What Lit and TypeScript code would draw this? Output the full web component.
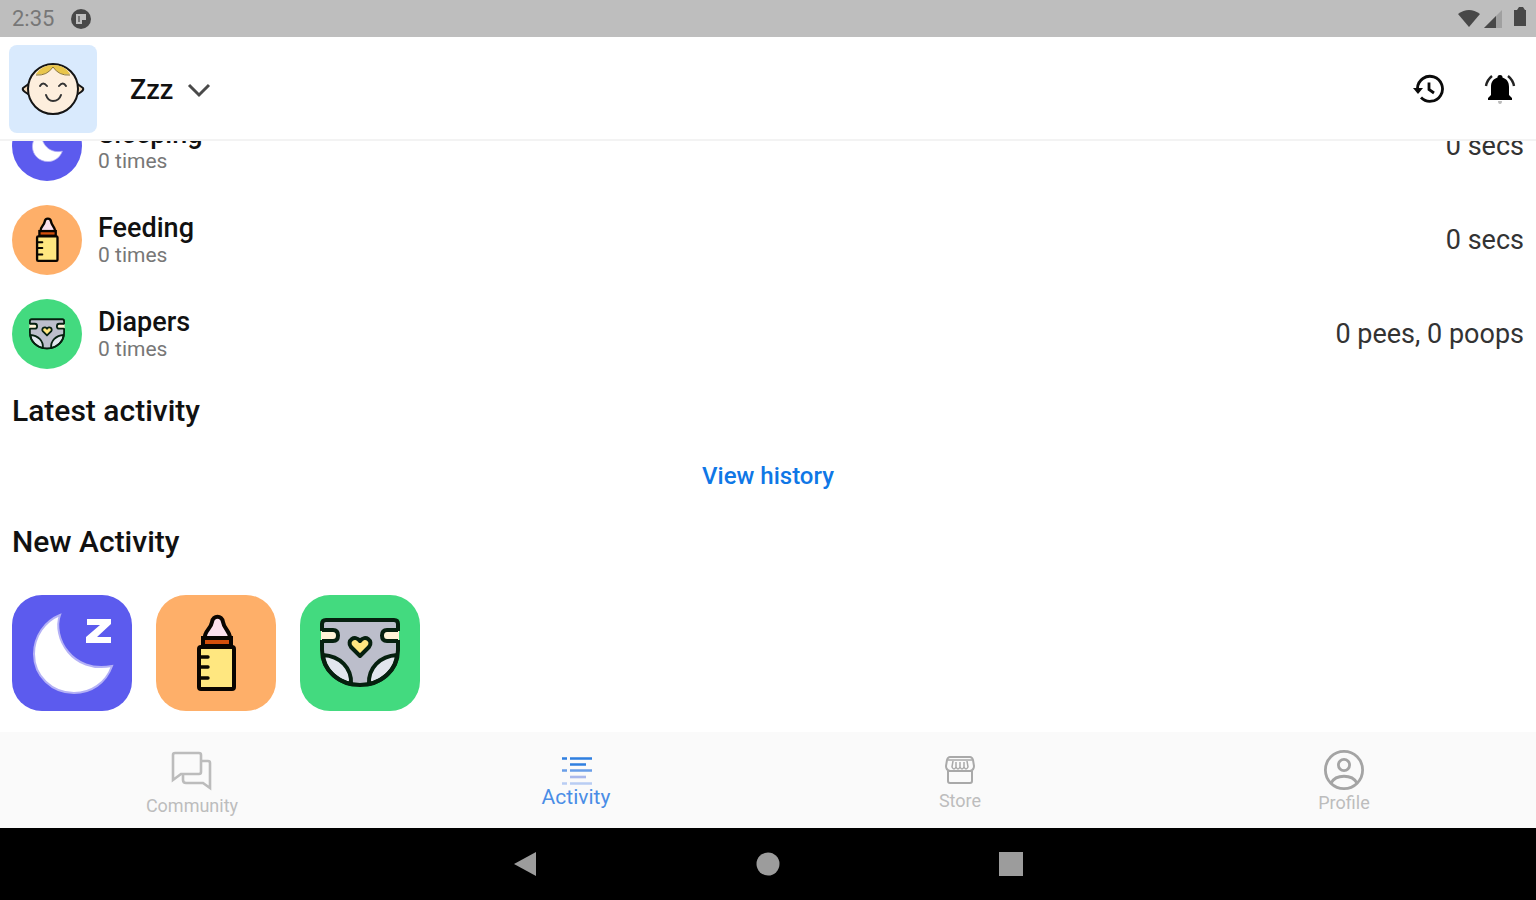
import { LitElement, html, css, svg, nothing } from "lit";
import { customElement, property, state } from "lit/decorators.js";

type Kind = "sleeping" | "feeding" | "diapers";

const letterZ = svg`<path d="M75 24H99V29L85 42H99V48H74V42L88 30H75Z" fill="#fff"/>`;

const glyphs = {
  sleeping: svg`
    <path d="M48 20C40 42 60 79 100 71C94 88 79 98 62 98C40 98 22 81 22 59C22 41 33 26 48 20Z"
      fill="#fff" stroke="#b4b1f6" stroke-width="2"/>`,
  feeding: svg`
    <path d="M50 43C49 36 56 35 56 28C56 20 66 20 66 28C66 35 73 36 72 43Z" fill="#fce0ec"/>
    <path d="M49 43C48 36 55 34 56 27C57 20 66 20 67 27C68 34 74 36 74 43" fill="none" stroke="#0a0500" stroke-width="4"/>
    <rect x="47" y="43" width="28" height="8" fill="#d34f0b" stroke="#0a0500" stroke-width="4"/>
    <rect x="43" y="52" width="35" height="42" rx="2" fill="#ffe780" stroke="#0a0500" stroke-width="4"/>
    <path d="M44 62h8M44 72h8M44 83h8" stroke="#0a0500" stroke-width="3.4" stroke-linecap="round"/>`,
  diapers: svg`
    <path d="M25 25H95Q98 25 98 29V55C98 76 80 90 60 90C40 90 22 76 22 55V29Q22 25 25 25Z" fill="#bcbecb"/>
    <path d="M23 60C40 61 52 73 51 89C36 86 24 74 23 60ZM97 60C80 61 68 73 69 89C84 86 96 74 97 60Z"
      fill="#e2e6ee" stroke="#06200f" stroke-width="4" stroke-linejoin="round"/>
    <path d="M21 36H33Q38 36 38 40.500Q38 45 33 45H21ZM99 36H87Q82 36 82 40.500Q82 45 87 45H99Z" fill="#fff3d6"/>
    <path d="M22 35H33Q38 35 38 40.500Q38 46 33 46H22M98 35H87Q82 35 82 40.500Q82 46 87 46H98" fill="none" stroke="#06200f" stroke-width="4"/>
    <path d="M22 36V29Q22 25 26 25H94Q98 25 98 29V36M22 45V55C22 76 40 90 60 90C80 90 98 76 98 55V45"
      fill="none" stroke="#06200f" stroke-width="4"/>
    <path d="M60 61L51 52C46 46 55 39 60 46C65 39 74 46 69 52Z" fill="#ffe680" stroke="#06200f" stroke-width="4" stroke-linejoin="round"/>`,
};

@customElement("activity-glyph")
export class ActivityGlyph extends LitElement {
  @property() kind: Kind = "sleeping";
  @property({ type: Boolean }) mini = false;
  static styles = css`
    :host { display: block; }
    svg { display: block; width: 100%; }
  `;
  render() {
    return html`<svg viewBox="0 0 120 116" aria-hidden="true">
      ${glyphs[this.kind]}${this.kind === "sleeping" && !this.mini ? letterZ : nothing}
    </svg>`;
  }
}

const tabIcons = {
  community: svg`<svg width="52" height="52" viewBox="0 0 52 52" fill="none" stroke="#bcbcbc" stroke-width="2.6" aria-hidden="true">
    <path d="M9 11H33Q35 11 35 13V30Q35 32 33 32H15L7 38V13Q7 11 9 11Z"/>
    <path d="M36 19H42Q44 19 44 21V46L37 41H20Q17 41 17 38V33"/></svg>`,
  activity: svg`<svg width="34" height="34" viewBox="0 0 34 34" fill="none" stroke-width="2.6" aria-hidden="true">
    <path d="M3 7.500H8M11 7.500H33M11 13.500H27" stroke="#2f7fe0"/>
    <path d="M3 19.500H8M11 19.500H33" stroke="#6a9ee8"/>
    <path d="M11 26H27" stroke="#a9b8ec"/><path d="M3 32.500H8M11 32.500H33" stroke="#b9cdf3"/></svg>`,
  store: svg`<svg width="42" height="42" viewBox="0 0 42 42" fill="none" stroke="#a9a9a9" stroke-width="2" aria-hidden="true">
    <path d="M11 10H31Q33 10 34 13L35 19Q35 23 31 24H11Q7 23 7 19L8 13Q9 10 11 10ZM9 24V34Q9 36 11 36H31Q33 36 33 34V24"/>
    <path d="M9 13H33M14 14L13 20Q15 24 17 20V15M17 20Q19 24 21 20V15M21 20Q23 24 25 20V15M25 20Q27 24 29 20L28 14" stroke-width="1.500"/></svg>`,
  profile: svg`<svg width="46" height="46" viewBox="0 0 46 46" fill="none" stroke="#a4a4a4" stroke-width="2.800" aria-hidden="true">
    <circle cx="23" cy="25" r="18.600"/><circle cx="23" cy="20" r="5.600"/><path d="M10 38C15 29 31 29 36 38"/></svg>`,
};

@customElement("app-root")
export class AppRoot extends LitElement {
  @state() private tab = "Activity";

  private rows: { kind: Kind; name: string; count: string; total: string }[] = [
    { kind: "sleeping", name: "Sleeping", count: "0 times", total: "0 secs" },
    { kind: "feeding", name: "Feeding", count: "0 times", total: "0 secs" },
    { kind: "diapers", name: "Diapers", count: "0 times", total: "0 pees, 0 poops" },
  ];

  private tabs = [
    { name: "Community", icon: tabIcons.community },
    { name: "Activity", icon: tabIcons.activity },
    { name: "Store", icon: tabIcons.store },
    { name: "Profile", icon: tabIcons.profile },
  ];

  static styles = css`
    :host {
      display: flex; flex-direction: column; height: 100vh; overflow: hidden;
      background: #fff; color: #111; font-family: Roboto, sans-serif;
    }
    * { box-sizing: border-box; }
    button { border: 0; padding: 0; margin: 0; background: none; font: inherit; color: inherit; cursor: pointer; }
    svg { display: block; }
    .status {
      flex: none; height: 37px; padding: 0 8px 0 12px; background: #bebebe;
      display: flex; align-items: center; justify-content: space-between;
    }
    .status-side { display: flex; align-items: center; gap: 16px; }
    .clock { font-size: 22px; line-height: 24px; color: #777; }
    .header {
      flex: none; height: 104px; padding: 2px 20px 0 9px; background: #fff;
      border-bottom: 2px solid #f3f3f3;
      display: flex; align-items: center; justify-content: space-between;
    }
    .child { display: flex; align-items: center; gap: 33px; }
    .avatar { width: 88px; height: 88px; border-radius: 8px; background: #d9eafd; }
    .child-name { display: flex; align-items: center; gap: 14px; padding-top: 2px; font-size: 27px; line-height: 32px; font-weight: 500; }
    .actions { display: flex; gap: 40px; }
    .scroll {
      flex: 1; min-height: 0; overflow: hidden; padding: 0 12px 21px;
      display: flex; flex-direction: column; justify-content: flex-end;
    }
    .rows { list-style: none; margin: 0; padding: 0; display: flex; flex-direction: column; gap: 24px; }
    .row { display: flex; align-items: center; gap: 16px; }
    .badge { width: 70px; height: 70px; border-radius: 50%; display: grid; place-items: center; }
    .sleeping { background: #5c5bee; }
    .feeding { background: #feaf69; }
    .diapers { background: #43da7f; }
    .mini-sleeping { width: 46px; }
    .mini-feeding { width: 70px; }
    .mini-diapers { width: 54px; }
    .row-text { flex: 1; }
    .row-name { font-size: 27px; line-height: 30px; font-weight: 500; }
    .row-count { font-size: 21px; line-height: 24px; color: #777; }
    .row-total { font-size: 27px; line-height: 30px; color: #333; }
    .heading { margin: 26px 0 0; font-size: 30px; line-height: 32px; font-weight: 500; }
    .history { align-self: center; margin: 33px 0 8px; font-size: 24px; line-height: 32px; font-weight: 500; color: #0f77e6; text-decoration: none; }
    .tiles { display: flex; gap: 24px; margin-top: 37px; }
    .tile { width: 120px; height: 116px; border-radius: 30px; }
    .tile-glyph { width: 120px; }
    .tabs { flex: none; height: 96px; background: #fafafa; display: grid; grid-template-columns: repeat(4, 1fr); }
    .tab { display: flex; flex-direction: column; align-items: center; justify-content: center; font-size: 18px; line-height: 24px; color: #bdbdbd; }
    .tab.selected { font-size: 21px; color: #4a8de6; }
    .system { flex: none; height: 72px; background: #000; display: flex; align-items: center; justify-content: center; gap: 219px; }
  `;

  render() {
    return html`
      <div class="status">
        <div class="status-side">
          <span class="clock">2:35</span>
          <svg width="22" height="22" viewBox="0 0 22 22" aria-hidden="true">
            <circle cx="11" cy="11" r="10" fill="#484848"/>
            <path d="M6 6H16V12H12V16H6Z" fill="#bebebe"/><path d="M8 8H10V14H8Z" fill="#777"/>
          </svg>
        </div>
        <svg width="70" height="24" viewBox="0 0 70 24" aria-hidden="true">
          <path d="M0 7Q11 -1 22 7L11 20Z" fill="#484848"/>
          <path d="M44 3V21H26Z" fill="#a0a0a0"/><path d="M38 9V21H26Z" fill="#484848"/>
          <path d="M59 3L61 0H65L67 3H68V19H56V3Z" fill="#484848"/>
        </svg>
      </div>
      <header class="header">
        <div class="child">
          <svg class="avatar" viewBox="0 0 88 88" role="img" aria-label="Baby">
            <g stroke="#151515" stroke-width="2" stroke-linejoin="round">
              <path d="M21 38L14 43Q13 45 16 47L22 51ZM67 38L74 43Q75 45 72 47L66 51Z" fill="#f3d9b8"/>
              <circle cx="44" cy="44" r="25" fill="#fdeedd"/>
            </g>
            <path d="M27 29Q33 20 44 20Q56 20 61 29Q51 31 44 22Q37 31 27 29Z" fill="#e9c64c"/>
            <path d="M27 30Q38 31 44 22Q50 31 61 30" fill="none" stroke="#8a7430" stroke-width="1"/>
            <path d="M31 41Q34 36 38 41M50 41Q54 36 57 41M37 50Q39 56 44 56Q50 56 52 50" fill="none" stroke="#333" stroke-width="2" stroke-linecap="round"/>
          </svg>
          <button class="child-name">
            Zzz
            <svg width="24" height="16" viewBox="0 0 24 16" fill="none" stroke="#4a4a4a" stroke-width="3" aria-hidden="true"><path d="M2 3L12 13L22 3"/></svg>
          </button>
        </div>
        <div class="actions">
          <button aria-label="History">
            <svg width="32" height="32" viewBox="0 0 32 32" fill="none" stroke="#0a0a0a" stroke-width="2.800" aria-hidden="true">
              <path d="M5.500 15A12.500 12.500 0 1 1 9 24.500"/>
              <path d="M1 15H11L6 21Z" fill="#0a0a0a" stroke="none"/><path d="M17 9.500V16.500L22 20"/>
            </svg>
          </button>
          <button aria-label="Reminders">
            <svg width="32" height="32" viewBox="0 0 32 32" aria-hidden="true">
              <path d="M16 2C18 2 18.500 3 18.500 4.500C23 6 25 9 25 14V22L28 25V27H4V25L7 22V14C7 9 9 6 13.500 4.500C13.500 3 14 2 16 2Z" fill="#000"/>
              <path d="M14 28H18Q18 31 16 31Q14 31 14 28Z" fill="#bbb"/>
              <path d="M2 13Q3 7 8 3M30 13Q29 7 24 3" fill="none" stroke="#222" stroke-width="2.400"/>
            </svg>
          </button>
        </div>
      </header>
      <main class="scroll">
        <ul class="rows">
          ${this.rows.map((r) => html`
            <li class="row">
              <div class="badge ${r.kind}"><activity-glyph class="mini-${r.kind}" mini .kind=${r.kind}></activity-glyph></div>
              <div class="row-text">
                <div class="row-name">${r.name}</div>
                <div class="row-count">${r.count}</div>
              </div>
              <div class="row-total">${r.total}</div>
            </li>`)}
        </ul>
        <h2 class="heading">Latest activity</h2>
        <a class="history" href="#history">View history</a>
        <h2 class="heading">New Activity</h2>
        <div class="tiles">
          ${this.rows.map((r) => html`
            <button class="tile ${r.kind}" aria-label=${r.name}><activity-glyph class="tile-glyph" .kind=${r.kind}></activity-glyph></button>`)}
        </div>
      </main>
      <nav class="tabs">
        ${this.tabs.map((t) => html`
          <button class="tab ${t.name === this.tab ? "selected" : ""}" @click=${() => (this.tab = t.name)}>${t.icon}<span>${t.name}</span></button>`)}
      </nav>
      <div class="system">
        <button aria-label="Back"><svg width="24" height="26" viewBox="0 0 24 26" aria-hidden="true"><path d="M1 13L23 1V25Z" fill="#9c9c9c"/></svg></button>
        <button aria-label="Home"><svg width="24" height="24" viewBox="0 0 24 24" aria-hidden="true"><circle cx="12" cy="12" r="11.500" fill="#9c9c9c"/></svg></button>
        <button aria-label="Overview"><svg width="24" height="24" viewBox="0 0 24 24" aria-hidden="true"><path d="M0 0H24V24H0Z" fill="#9c9c9c"/></svg></button>
      </div>
    `;
  }
}
